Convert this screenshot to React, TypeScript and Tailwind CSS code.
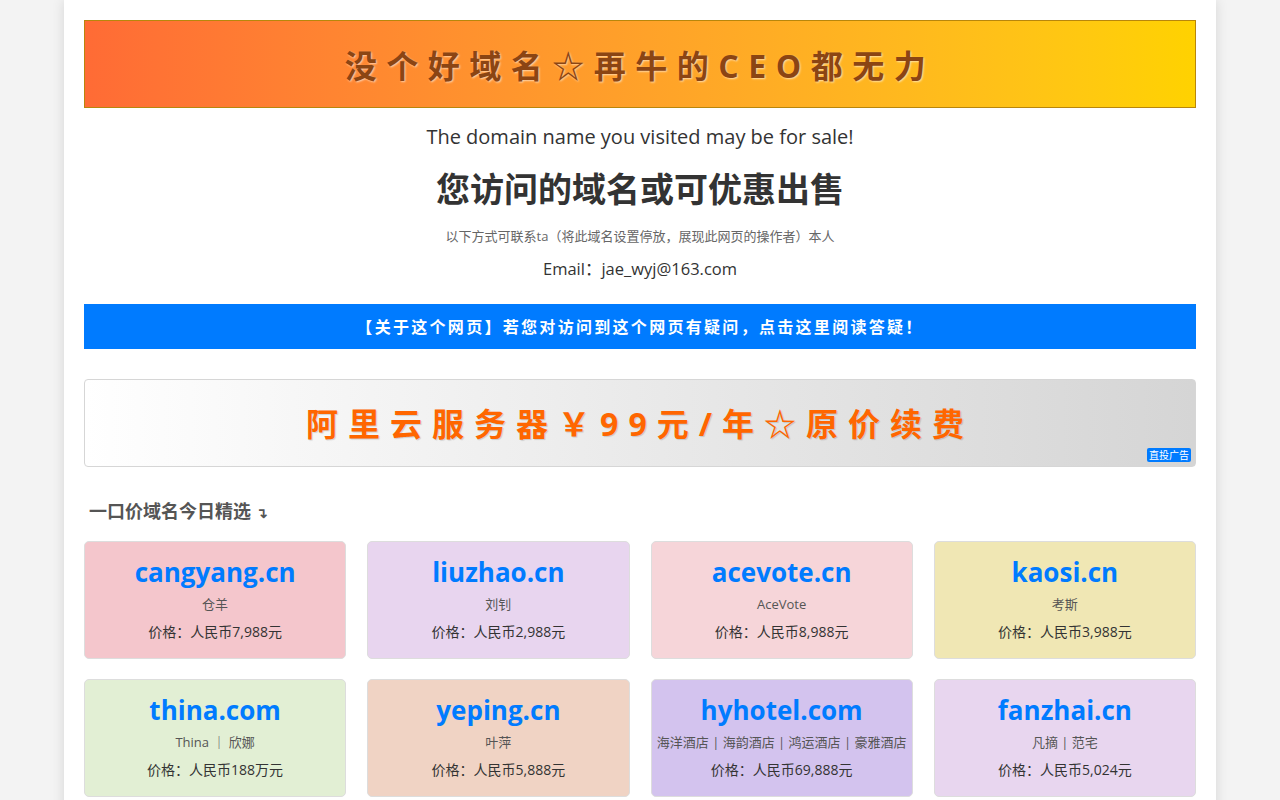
const cards = [
  { domain: "cangyang.cn", sub: "仓羊", price: "价格：人民币7,988元", bg: "bg-[#f4c6cc]" },
  { domain: "liuzhao.cn", sub: "刘钊", price: "价格：人民币2,988元", bg: "bg-[#e8d5ef]" },
  { domain: "acevote.cn", sub: "AceVote", price: "价格：人民币8,988元", bg: "bg-[#f6d5d9]" },
  { domain: "kaosi.cn", sub: "考斯", price: "价格：人民币3,988元", bg: "bg-[#f0e7b4]" },
  { domain: "thina.com", sub: "Thina ｜ 欣娜", price: "价格：人民币188万元", bg: "bg-[#e2efd4]" },
  { domain: "yeping.cn", sub: "叶萍", price: "价格：人民币5,888元", bg: "bg-[#f0d3c4]" },
  { domain: "hyhotel.com", sub: "海洋酒店 | 海韵酒店 | 鸿运酒店 | 豪雅酒店", price: "价格：人民币69,888元", bg: "bg-[#d3c3ee]" },
  { domain: "fanzhai.cn", sub: "凡摘 | 范宅", price: "价格：人民币5,024元", bg: "bg-[#e8d6ef]" },
];

export default function App() {
  return (
    <div className="min-h-screen bg-[#f3f3f3] font-['Open_Sans','Noto_Sans_CJK_SC',sans-serif] text-[#333]">
      <main className="mx-auto w-[1152px] bg-white px-5 pt-5 pb-10 shadow-[0_0_12px_rgba(0,0,0,0.12)]">
        {/* top banner */}
        <div className="flex h-[88px] items-center justify-center border border-[#b8860b] bg-gradient-to-r from-[#ff6b35] to-[#ffd200] pt-[4px]">
          <p className="text-[32px] font-bold tracking-[9.5px] text-[#8b4513] [text-shadow:1px_1px_2px_rgba(255,255,255,0.6)]">
            没个好域名☆再牛的CEO都无力
          </p>
        </div>

        <div className="text-center">
          <p className="mt-[14px] text-[20px] leading-[30px]">The domain name you visited may be for sale!</p>
          <h1 className="mt-[14px] text-[34px] font-bold leading-[46px]">您访问的域名或可优惠出售</h1>
          <p className="mt-[14px] text-[13px] leading-[20px] text-[#666]">
            以下方式可联系ta（将此域名设置停放，展现此网页的操作者）本人
          </p>
          <p className="mt-[10px] text-[16.5px] leading-[26px]">Email：jae_wyj@163.com</p>
        </div>

        {/* notice bar */}
        <a
          href="#"
          className="mt-[22px] flex h-[45px] items-center justify-center bg-[#007bff] text-[16px] font-bold tracking-[2.3px] text-white"
        >
          【关于这个网页】若您对访问到这个网页有疑问，点击这里阅读答疑！
        </a>

        {/* ad banner */}
        <div className="relative mt-[30px] flex h-[88px] items-center justify-center rounded border border-[#d6d6d6] bg-gradient-to-r from-white to-[#d5d5d5] pt-[2px]">
          <p className="text-[32px] font-bold tracking-[10px] text-[#ff6600] [text-shadow:1px_1px_1px_rgba(0,0,0,0.15)]">
            阿里云服务器￥99元/年☆原价续费
          </p>
          <span className="absolute right-[4px] bottom-[4px] rounded-[2px] bg-[#007bff] px-[2px] text-[10px] leading-[14px] text-white">
            直投广告
          </span>
        </div>

        <h2 className="mt-[31px] pl-[5px] text-[18px] font-bold leading-[26px] text-[#555]">
          一口价域名今日精选 <span className="text-[14px]">↴</span>
        </h2>

        <div className="mt-[15px] grid grid-cols-4 gap-x-[21px] gap-y-[20px]">
          {cards.map((c) => (
            <div
              key={c.domain}
              className={`flex h-[118px] flex-col items-center rounded-[5px] border border-[#ddd] ${c.bg} pt-[12px] text-center`}
            >
              <div className="text-[26px] font-bold leading-[36px] text-[#007bff]">{c.domain}</div>
              <div className="mt-[5px] text-[13px] leading-[18px] text-[#555]">{c.sub}</div>
              <div className="mt-[9px] text-[14px] leading-[20px] text-[#333]">{c.price}</div>
            </div>
          ))}
        </div>
      </main>
    </div>
  );
}
